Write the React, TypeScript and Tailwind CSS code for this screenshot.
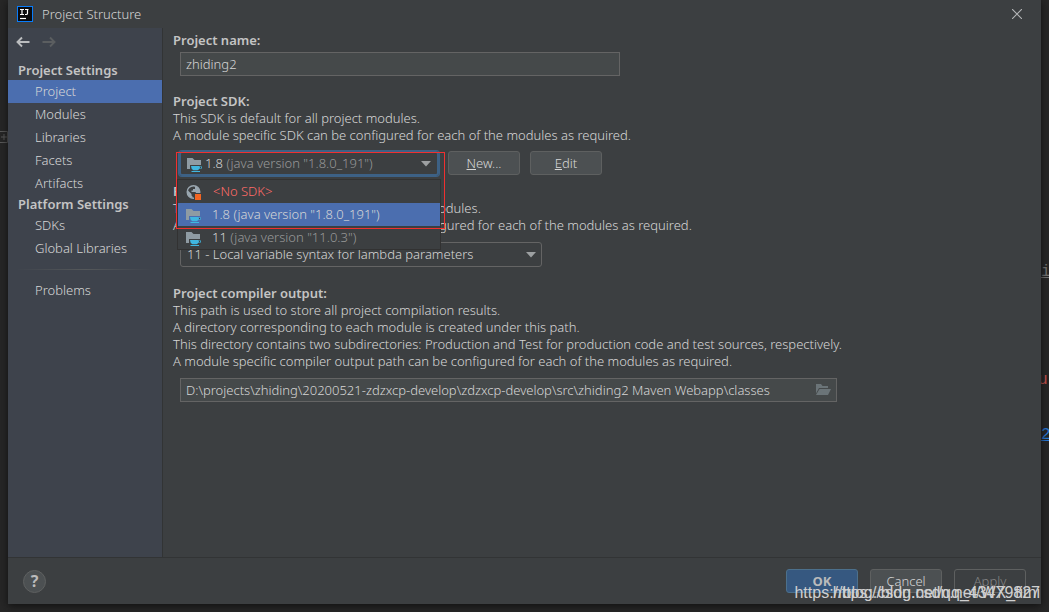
import type { ReactNode } from "react";

const projectItems = ["Project", "Modules", "Libraries", "Facets", "Artifacts"];
const platformItems = ["SDKs", "Global Libraries"];

function AppLogo() {
  return (
    <svg width="16" height="16" viewBox="0 0 16 16" aria-hidden="true">
      <rect width="16" height="16" fill="#087cfa" />
      <rect x="1" y="1" width="14" height="14" fill="#0b0b0d" />
      <path d="M3 3.500h4M5 3.500v5M3 8.500h4M8 3.500h3.500M10.500 3.500v3.700q0 1.300-1.300 1.300H8" stroke="#fff" strokeWidth="1.200" fill="none" />
      <path d="M3 12.500h6" stroke="#fff" strokeWidth="1.200" />
    </svg>
  );
}

function Arrow({ flip = false, color }: { flip?: boolean; color: string }) {
  return (
    <svg width="14" height="12" viewBox="0 0 14 12" fill="none" stroke={color} strokeWidth="1.900" aria-hidden="true">
      <path d={flip ? "M0.500 6h12M8 1.500L12.500 6L8 10.500" : "M13.500 6h-12M6 1.500L1.500 6L6 10.500"} />
    </svg>
  );
}

function JdkIcon() {
  return (
    <svg width="16" height="16" viewBox="0 0 16 16" aria-hidden="true">
      <path d="M0 2h5.500l2 2H14v5H3v4H0z" fill="#8f9ba3" />
      <path d="M4 10h8.500v.5H15v2h-2.300Q12 13.800 10.500 14.200H6.500Q4 13.200 4 10z" fill="#40b6e0" />
      <path d="M4.500 15h8.500v1H4.500z" fill="#40b6e0" />
      <path d="M13 11.100h1.200v.8H12.900z" fill="#3c3f41" />
    </svg>
  );
}

function NoSdkIcon() {
  return (
    <svg width="16" height="16" viewBox="0 0 16 16" aria-hidden="true">
      <circle cx="7.500" cy="8" r="6.300" fill="none" stroke="#9aa7b0" strokeWidth="1.400" />
      <path d="M1.500 6l4 4v1.500l1 1V14C3.500 13.500 1 10.500 1.500 6zM9 2l2.800 1.500L14 7v3H10V8.500L9 8H5.500V6.500H7V5h2z" fill="#9aa7b0" />
      <rect x="8" y="9" width="8" height="7" fill="#3c3f41" />
      <rect x="9" y="10" width="6" height="6" fill="#f26522" />
    </svg>
  );
}

function FolderIcon() {
  return (
    <svg width="16" height="12" viewBox="0 0 16 12" aria-hidden="true">
      <path d="M1 0h5l1.500 2H13v2H4L1 9.500z" fill="#6b7478" />
      <path d="M4.500 5H16l-3 6H1z" fill="#6b7478" />
    </svg>
  );
}

function Caret() {
  return (
    <svg width="10" height="6" viewBox="0 0 10 6" aria-hidden="true">
      <path d="M0 0h10L5 5.500z" fill="#9da0a2" />
    </svg>
  );
}

function NavItem({ label, active = false }: { label: string; active?: boolean }) {
  return (
    <li>
      <a href="#" aria-current={active ? "page" : undefined} className={`block h-[23px] pl-[27px] leading-[23px] ${active ? "bg-[#4b6eaf]" : ""}`}>
        {label}
      </a>
    </li>
  );
}

function DialogButton({ children, className }: { children: ReactNode; className: string }) {
  return (
    <button type="button" className={`h-6 w-[72px] rounded-[3px] border leading-5 ${className}`}>
      {children}
    </button>
  );
}

const plain = "border-[#5e6060] bg-[#4c5052]";
const heading = "block font-semibold text-[#c4c4c4]";
const path = "D:\\projects\\zhiding\\20200521-zdzxcp-develop\\zdzxcp-develop\\src\\zhiding2 Maven Webapp\\classes";

export default function App() {
  return (
    <div className="relative flex min-h-screen flex-col overflow-hidden bg-[#272727] px-2 pb-2 font-['Noto_Sans',sans-serif] text-[13px] leading-[17px] font-light text-[#d6d6d6]">
      <div aria-hidden="true">
        <svg className="absolute top-[131px] left-0" width="8" height="12" fill="none" stroke="#5a5a5a">
          <path d="M0 .5h7.500v11H0M1 6h6M4 3v6" />
        </svg>
        <span className="absolute top-[262px] left-[1041px] font-['Liberation_Mono',monospace] text-base leading-5 font-normal text-[#777777] underline">i</span>
        <span className="absolute top-[370px] left-[1038px] font-['Liberation_Mono',monospace] text-base leading-5 font-normal text-[#c75450]">u</span>
        <span className="absolute top-[425px] left-[1041px] font-['Liberation_Mono',monospace] text-base leading-5 font-normal text-[#287bde] underline">2</span>
      </div>

      <main className="relative flex flex-1 flex-col bg-[#3c3f41] shadow-[0_2px_8px_#111]">
        <header className="flex h-7 items-center pr-[19px] pl-[9px]">
          <AppLogo />
          <h1 className="ml-[9px] flex-1">Project Structure</h1>
          <button type="button" aria-label="Close">
            <svg width="10" height="10" viewBox="0 0 10 10" stroke="#b4b6b7" strokeWidth="1.100" aria-hidden="true">
              <path d="M0 0l10 10M10 0L0 10" />
            </svg>
          </button>
        </header>

        <div className="flex flex-1">
          <nav className="w-[155px] shrink-0 border-r border-[#323435] bg-[#3e434c]">
            <div className="flex h-[33px] gap-3 pt-2 pl-2">
              <button type="button" aria-label="Back" className="h-3"><Arrow color="#bbbdbf" /></button>
              <button type="button" aria-label="Forward" disabled className="h-3"><Arrow flip color="#5b5e60" /></button>
            </div>
            <h2 className={`${heading} h-[19px] pl-[10px] leading-[19px]`}>Project Settings</h2>
            <ul>{projectItems.map((label) => <NavItem key={label} label={label} active={label === "Project"} />)}</ul>
            <h2 className={`${heading} h-[19px] pl-[10px] leading-[19px]`}>Platform Settings</h2>
            <ul>{platformItems.map((label) => <NavItem key={label} label={label} />)}</ul>
            <div className="mx-2 my-[9px] h-px bg-linear-to-r from-transparent via-[#55585a] to-transparent" />
            <ul><NavItem label="Problems" /></ul>
          </nav>

          <form className="min-w-0 flex-1 px-[10px] pt-1">
            <label htmlFor="project-name" className={heading}>Project name:</label>
            <input id="project-name" defaultValue="zhiding2" className="mt-[3px] ml-[7px] block h-6 w-full max-w-[440px] border border-[#646464] bg-[#45494a] px-[5px] pb-px" />

            <section className="mt-[17px]">
              <h2 id="sdk-label" className={heading}>Project SDK:</h2>
              <p>This SDK is default for all project modules.</p>
              <p>A module specific SDK can be configured for each of the modules as required.</p>
              <div className="mt-[7px] ml-[6px] flex gap-[10px]">
                <div className="relative -mr-px w-[260px]">
                  <button type="button" role="combobox" aria-expanded="true" aria-controls="sdk-list" aria-labelledby="sdk-label" className="flex h-[25px] w-full items-center rounded-[3px] border-2 border-[#3d6185] px-[6px] text-left ring-1 ring-[#3d6185]">
                    <JdkIcon />
                    <span className="ml-[2px] flex-1 text-[#999999]"><span className="text-[#d6d6d6]">1.8</span> (java version "1.8.0_191")</span>
                    <Caret />
                  </button>
                  <ul id="sdk-list" role="listbox" aria-labelledby="sdk-label" className="absolute top-[28px] -left-[2px] z-10 w-[264px] border border-[#323232] bg-[#3c3f41]">
                    <li role="option" aria-selected="false" className="flex h-[23px] items-center gap-[11px] pl-2 text-[#ff6b68]"><NoSdkIcon />&lt;No SDK&gt;</li>
                    <li role="option" aria-selected="true" className="flex h-[23px] items-center gap-[10px] bg-[#4b6eaf] pl-2"><JdkIcon />1.8 (java version "1.8.0_191")</li>
                    <li role="option" aria-selected="false" className="flex h-[23px] items-center gap-[10px] pl-2"><JdkIcon /><span className="text-[#999999]"><span className="text-[#d6d6d6]">11</span> (java version "11.0.3")</span></li>
                  </ul>
                  <div className="pointer-events-none absolute top-px -left-[3px] z-20 h-[77px] w-[269px] border border-[#f03030]" />
                </div>
                <DialogButton className={plain}><u>N</u>ew...</DialogButton>
                <DialogButton className={plain}><u>E</u>dit</DialogButton>
              </div>
            </section>

            <section className="mt-[7px]">
              <label htmlFor="language-level" className={heading}>Project language level:</label>
              <p>This language level is default for all project modules.</p>
              <p>A module specific language level can be configured for each of the modules as required.</p>
              <div className="relative mt-2 ml-[7px] max-w-[362px]">
                <select id="language-level" className="block h-[25px] w-full appearance-none rounded-[3px] border border-[#646464] bg-[#3c3f41] px-[6px]">
                  <option>11 - Local variable syntax for lambda parameters</option>
                </select>
                <span className="pointer-events-none absolute inset-y-0 right-[6px] flex items-center"><Caret /></span>
              </div>
            </section>

            <section className="mt-[18px]">
              <label htmlFor="output-path" className={heading}>Project compiler output:</label>
              <p>This path is used to store all project compilation results.</p>
              <p>A directory corresponding to each module is created under this path.</p>
              <p>This directory contains two subdirectories: Production and Test for production code and test sources, respectively.</p>
              <p>A module specific compiler output path can be configured for each of the modules as required.</p>
              <div className="mt-2 ml-[7px] flex h-6 max-w-[657px] items-center border border-[#646464] bg-[#45494a] pr-[5px]">
                <input id="output-path" defaultValue={path} className="h-full min-w-0 flex-1 bg-transparent px-[5px] pb-px" />
                <button type="button" aria-label="Browse"><FolderIcon /></button>
              </div>
            </section>
          </form>
        </div>

        <footer className="flex h-[47px] items-center gap-3 border-t border-[#323435] px-[15px]">
          <button type="button" aria-label="Help" className="mr-auto size-[23px] rounded-full border border-[#5e6060] bg-[#4c5052] text-base leading-[21px] font-bold text-[#bbbbbb]">?</button>
          <DialogButton className="border-[#4c708c] bg-[#365880] font-bold text-[#bbbbbb]">OK</DialogButton>
          <DialogButton className={plain}>Cancel</DialogButton>
          <DialogButton className="border-[#5e6060] text-[#858585]">Apply</DialogButton>
        </footer>
      </main>

      <div className="pointer-events-none absolute right-[9px] bottom-[9px] z-30 font-['Liberation_Sans',sans-serif] text-base leading-5 font-normal text-[#d0d0d0]">
        <span>https://blog.csdn.net/qq_43479827</span>
        <span className="absolute right-0 bottom-0 whitespace-nowrap">https://blog.csdn.net/WX_fimi</span>
      </div>
    </div>
  );
}
